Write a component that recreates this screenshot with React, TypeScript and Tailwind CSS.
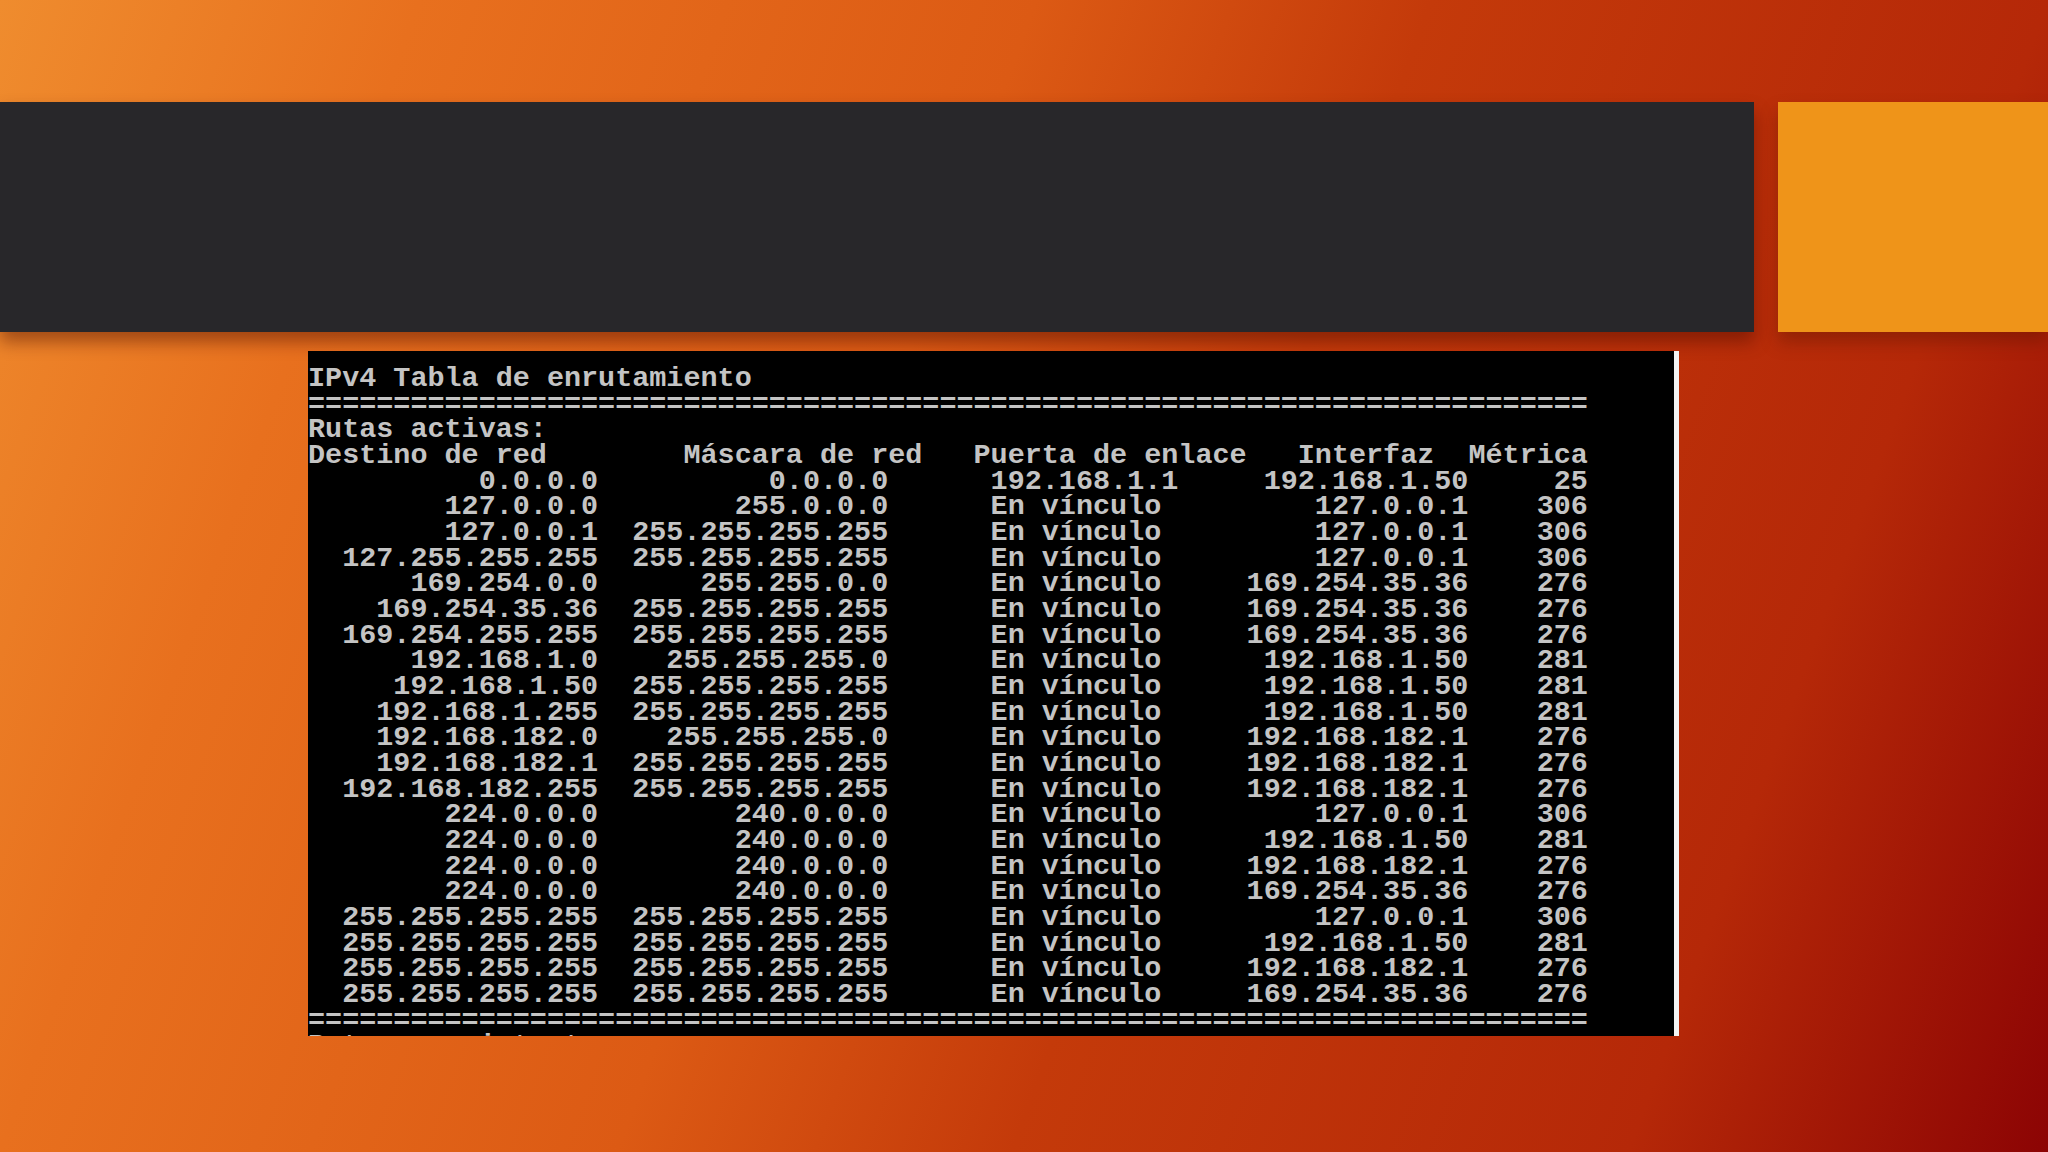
const routes: [string, string, string, string, string][] = [
  ["0.0.0.0", "0.0.0.0", "192.168.1.1", "192.168.1.50", "25"],
  ["127.0.0.0", "255.0.0.0", "En vínculo", "127.0.0.1", "306"],
  ["127.0.0.1", "255.255.255.255", "En vínculo", "127.0.0.1", "306"],
  ["127.255.255.255", "255.255.255.255", "En vínculo", "127.0.0.1", "306"],
  ["169.254.0.0", "255.255.0.0", "En vínculo", "169.254.35.36", "276"],
  ["169.254.35.36", "255.255.255.255", "En vínculo", "169.254.35.36", "276"],
  ["169.254.255.255", "255.255.255.255", "En vínculo", "169.254.35.36", "276"],
  ["192.168.1.0", "255.255.255.0", "En vínculo", "192.168.1.50", "281"],
  ["192.168.1.50", "255.255.255.255", "En vínculo", "192.168.1.50", "281"],
  ["192.168.1.255", "255.255.255.255", "En vínculo", "192.168.1.50", "281"],
  ["192.168.182.0", "255.255.255.0", "En vínculo", "192.168.182.1", "276"],
  ["192.168.182.1", "255.255.255.255", "En vínculo", "192.168.182.1", "276"],
  ["192.168.182.255", "255.255.255.255", "En vínculo", "192.168.182.1", "276"],
  ["224.0.0.0", "240.0.0.0", "En vínculo", "127.0.0.1", "306"],
  ["224.0.0.0", "240.0.0.0", "En vínculo", "192.168.1.50", "281"],
  ["224.0.0.0", "240.0.0.0", "En vínculo", "192.168.182.1", "276"],
  ["224.0.0.0", "240.0.0.0", "En vínculo", "169.254.35.36", "276"],
  ["255.255.255.255", "255.255.255.255", "En vínculo", "127.0.0.1", "306"],
  ["255.255.255.255", "255.255.255.255", "En vínculo", "192.168.1.50", "281"],
  ["255.255.255.255", "255.255.255.255", "En vínculo", "192.168.182.1", "276"],
  ["255.255.255.255", "255.255.255.255", "En vínculo", "169.254.35.36", "276"],
];

const rule = "=".repeat(75);

function formatRoute([dest, mask, gw, iface, metric]: [string, string, string, string, string]) {
  return (
    dest.padStart(17) +
    mask.padStart(17) +
    "      " +
    gw.padEnd(12) +
    iface.padStart(16) +
    metric.padStart(7)
  );
}

const lines = [
  "IPv4 Tabla de enrutamiento",
  rule,
  "Rutas activas:",
  "Destino de red        Máscara de red   Puerta de enlace   Interfaz  Métrica",
  ...routes.map(formatRoute),
  rule,
  "Rutas persistentes:",
];

function RouteConsole() {
  return (
    <div className="ml-[308px] mt-[19px] h-[685px] w-[1371px] overflow-hidden border-r-[5px] border-[#f4f4f4] bg-black">
      <pre className="pt-[15px] font-['Liberation_Mono',monospace] text-[28.45px] font-bold leading-[25.67px] text-[#c4c4c4]">
        {lines.join("\n")}
      </pre>
    </div>
  );
}

export default function App() {
  return (
    <div className="flex h-[1152px] w-[2048px] flex-col overflow-hidden bg-[linear-gradient(110deg,#ef8c2e_0%,#e8701e_17%,#dc5a14_42%,#c43a0a_58%,#b52808_83%,#8c0404_100%)]">
      <div className="mt-[102px] flex h-[230px] gap-[24px]">
        <div className="w-[1754px] bg-[#28272a] shadow-[0_10px_16px_rgba(70,10,0,0.45)]" />
        <div className="flex-1 bg-[#ef9419] shadow-[0_10px_16px_rgba(90,20,0,0.4)]" />
      </div>
      <RouteConsole />
    </div>
  );
}
